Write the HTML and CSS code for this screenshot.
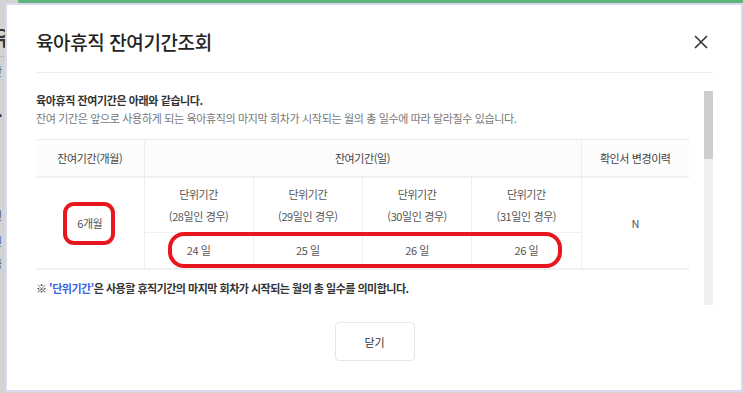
FILE: index.html
```html
<!DOCTYPE html>
<html lang="ko">
<head>
    <meta charset="UTF-8">
    <meta name="viewport" content="width=device-width, initial-scale=1.0">
    <title>육아휴직 잔여기간조회</title>
    <link rel="stylesheet" href="styles.css">
</head>
<body>
    <div class="page">
        <div class="top-bar"></div>
        <div class="page-lines">
            <div class="page-title">유</div>
            <div class="page-rule"></div>
            <div class="page-small">산</div>
            <div class="page-dark">r.</div>
            <div class="page-small gap">신</div>
            <div class="page-link">긴</div>
            <div class="page-small">금</div>
            <div class="page-link">ㅣ</div>
        </div>
    </div>

    <div class="overlay">
        <div class="modal">
            <div class="modal-head">
                <h1>육아휴직 잔여기간조회</h1>
                <button class="close-btn" aria-label="닫기">
                    <svg width="14" height="14" viewBox="0 0 14 14">
                        <path d="M1 1 L13 13 M13 1 L1 13" stroke="#333" stroke-width="1.6" fill="none"/>
                    </svg>
                </button>
            </div>

            <div class="modal-body">
                <div class="scroll-area">
                    <p class="lead">육아휴직 잔여기간은 아래와 같습니다.</p>
                    <p class="desc">잔여 기간은 앞으로 사용하게 되는 육아휴직의 마지막 회차가 시작되는 월의 총 일수에 따라 달라질수 있습니다.</p>

                    <div class="table-wrap">
                        <table class="period-table">
                            <tr class="head-row">
                                <th class="col-side">잔여기간(개월)</th>
                                <th colspan="4">잔여기간(일)</th>
                                <th class="col-side">확인서 변경이력</th>
                            </tr>
                            <tr class="unit-row">
                                <td rowspan="2">6개월</td>
                                <td>단위기간<br>(28일인 경우)</td>
                                <td>단위기간<br>(29일인 경우)</td>
                                <td>단위기간<br>(30일인 경우)</td>
                                <td>단위기간<br>(31일인 경우)</td>
                                <td rowspan="2" class="last">N</td>
                            </tr>
                            <tr class="day-row">
                                <td>24 일</td>
                                <td>25 일</td>
                                <td>26 일</td>
                                <td>26 일</td>
                            </tr>
                        </table>
                        <div class="mark mark-month"></div>
                        <div class="mark mark-days"></div>
                    </div>

                    <p class="note">※ <span class="note-key">'단위기간'</span>은 사용할 휴직기간의 마지막 회차가 시작되는 월의 총 일수를 의미합니다.</p>
                </div>
                <div class="scrollbar">
                    <div class="thumb"></div>
                </div>
            </div>

            <div class="modal-foot">
                <button class="btn-close">닫기</button>
            </div>
        </div>
    </div>
</body>
</html>
```

FILE: styles.css
```css
* {
    margin: 0;
    padding: 0;
    box-sizing: border-box;
    font-family: "Noto Sans CJK KR", "Noto Sans", sans-serif;
}

body {
    width: 743px;
    height: 393px;
    overflow: hidden;
    background: #d3d3d6;
    position: relative;
}

/* page behind the dimmed overlay */
.page {
    height: 100%;
}

.top-bar {
    margin-left: 18px;
    height: 3px;
    background: #5db57c;
}

.page-lines {
    margin-left: -8px;
    color: #555;
}

.page-title {
    font-size: 20px;
    font-weight: 700;
    color: #333;
    margin-top: 20px;
}

.page-rule {
    height: 1px;
    background: #bbb;
    margin-top: 4px;
}

.page-small {
    font-size: 11px;
    margin-top: 6px;
}

.page-dark {
    font-size: 14px;
    font-weight: 700;
    color: #333;
    margin-top: 22px;
}

.page-small.gap {
    margin-top: 86px;
}

.page-link {
    font-size: 11px;
    color: #4a5fc8;
    margin-top: 10px;
}

/* modal */
.overlay {
    position: absolute;
    left: 5px;
    top: 3px;
    right: 0;
    bottom: 1px;
    border: 2px solid #d8dbef;
}

.modal {
    width: 734px;
    height: 385px;
    background: #fff;
    padding: 0 28px 0 29px;
    display: flex;
    flex-direction: column;
}

.modal-head {
    height: 68px;
    padding-top: 6px;
    display: flex;
    align-items: center;
    justify-content: space-between;
    border-bottom: 1px solid #eeeeee;
}

.modal-head h1 {
    font-size: 19px;
    font-weight: 500;
    color: #222;
    letter-spacing: -0.4px;
}

.close-btn {
    background: none;
    border: none;
    width: 14px;
    height: 14px;
    margin-right: 5px;
    display: flex;
    cursor: pointer;
}

.modal-body {
    margin-top: 18px;
    height: 214px;
    display: flex;
    gap: 15px;
}

.scroll-area {
    width: 653px;
    overflow: hidden;
}

.scrollbar {
    width: 9px;
    background: #efefef;
}

.thumb {
    height: 68px;
    background: #cdcdcd;
}

.lead {
    font-size: 11px;
    font-weight: 700;
    color: #333;
    letter-spacing: -0.4px;
    line-height: 18px;
}

.desc {
    font-size: 11px;
    color: #777;
    letter-spacing: -0.35px;
    line-height: 18px;
}

.table-wrap {
    position: relative;
    margin-top: 12px;
}

.period-table {
    width: 653px;
    border-collapse: collapse;
    table-layout: fixed;
    border-top: 1px solid #ebebeb;
    border-bottom: 2px solid #efefef;
}

.period-table th,
.period-table td {
    font-size: 11px;
    font-weight: 400;
    color: #555;
    letter-spacing: -0.4px;
    text-align: center;
    border-left: 1px solid #efefef;
}

.period-table tr > :first-child {
    border-left: none;
}

.period-table .col-side {
    width: 108px;
}

.head-row th {
    height: 37px;
    color: #444;
    background: #fcfcfc;
    border-bottom: 2px solid #f1f1f1;
}

.unit-row td {
    height: 56px;
    line-height: 22px;
}

.day-row td {
    height: 36px;
    border-top: 1px solid #efefef;
}

.day-row td:first-child {
    border-left: 1px solid #efefef;
}

/* red highlight marks drawn over the table */
.mark {
    position: absolute;
    border: 4px solid #e8171f;
}

.mark-month {
    left: 27px;
    top: 63px;
    width: 52px;
    height: 43px;
    border-radius: 11px;
}

.mark-days {
    left: 132px;
    top: 93px;
    width: 394px;
    height: 36px;
    border-radius: 16px;
}

.note {
    margin-top: 9px;
    font-size: 11px;
    font-weight: 700;
    color: #333;
    letter-spacing: -0.5px;
    line-height: 18px;
}

.note-key {
    color: #3f62e6;
}

.modal-foot {
    margin-top: 17px;
    display: flex;
    justify-content: center;
}

.btn-close {
    width: 80px;
    height: 39px;
    background: #fff;
    border: 1px solid #e6e6e6;
    border-radius: 4px;
    font-size: 11px;
    color: #333;
    cursor: pointer;
}
```
